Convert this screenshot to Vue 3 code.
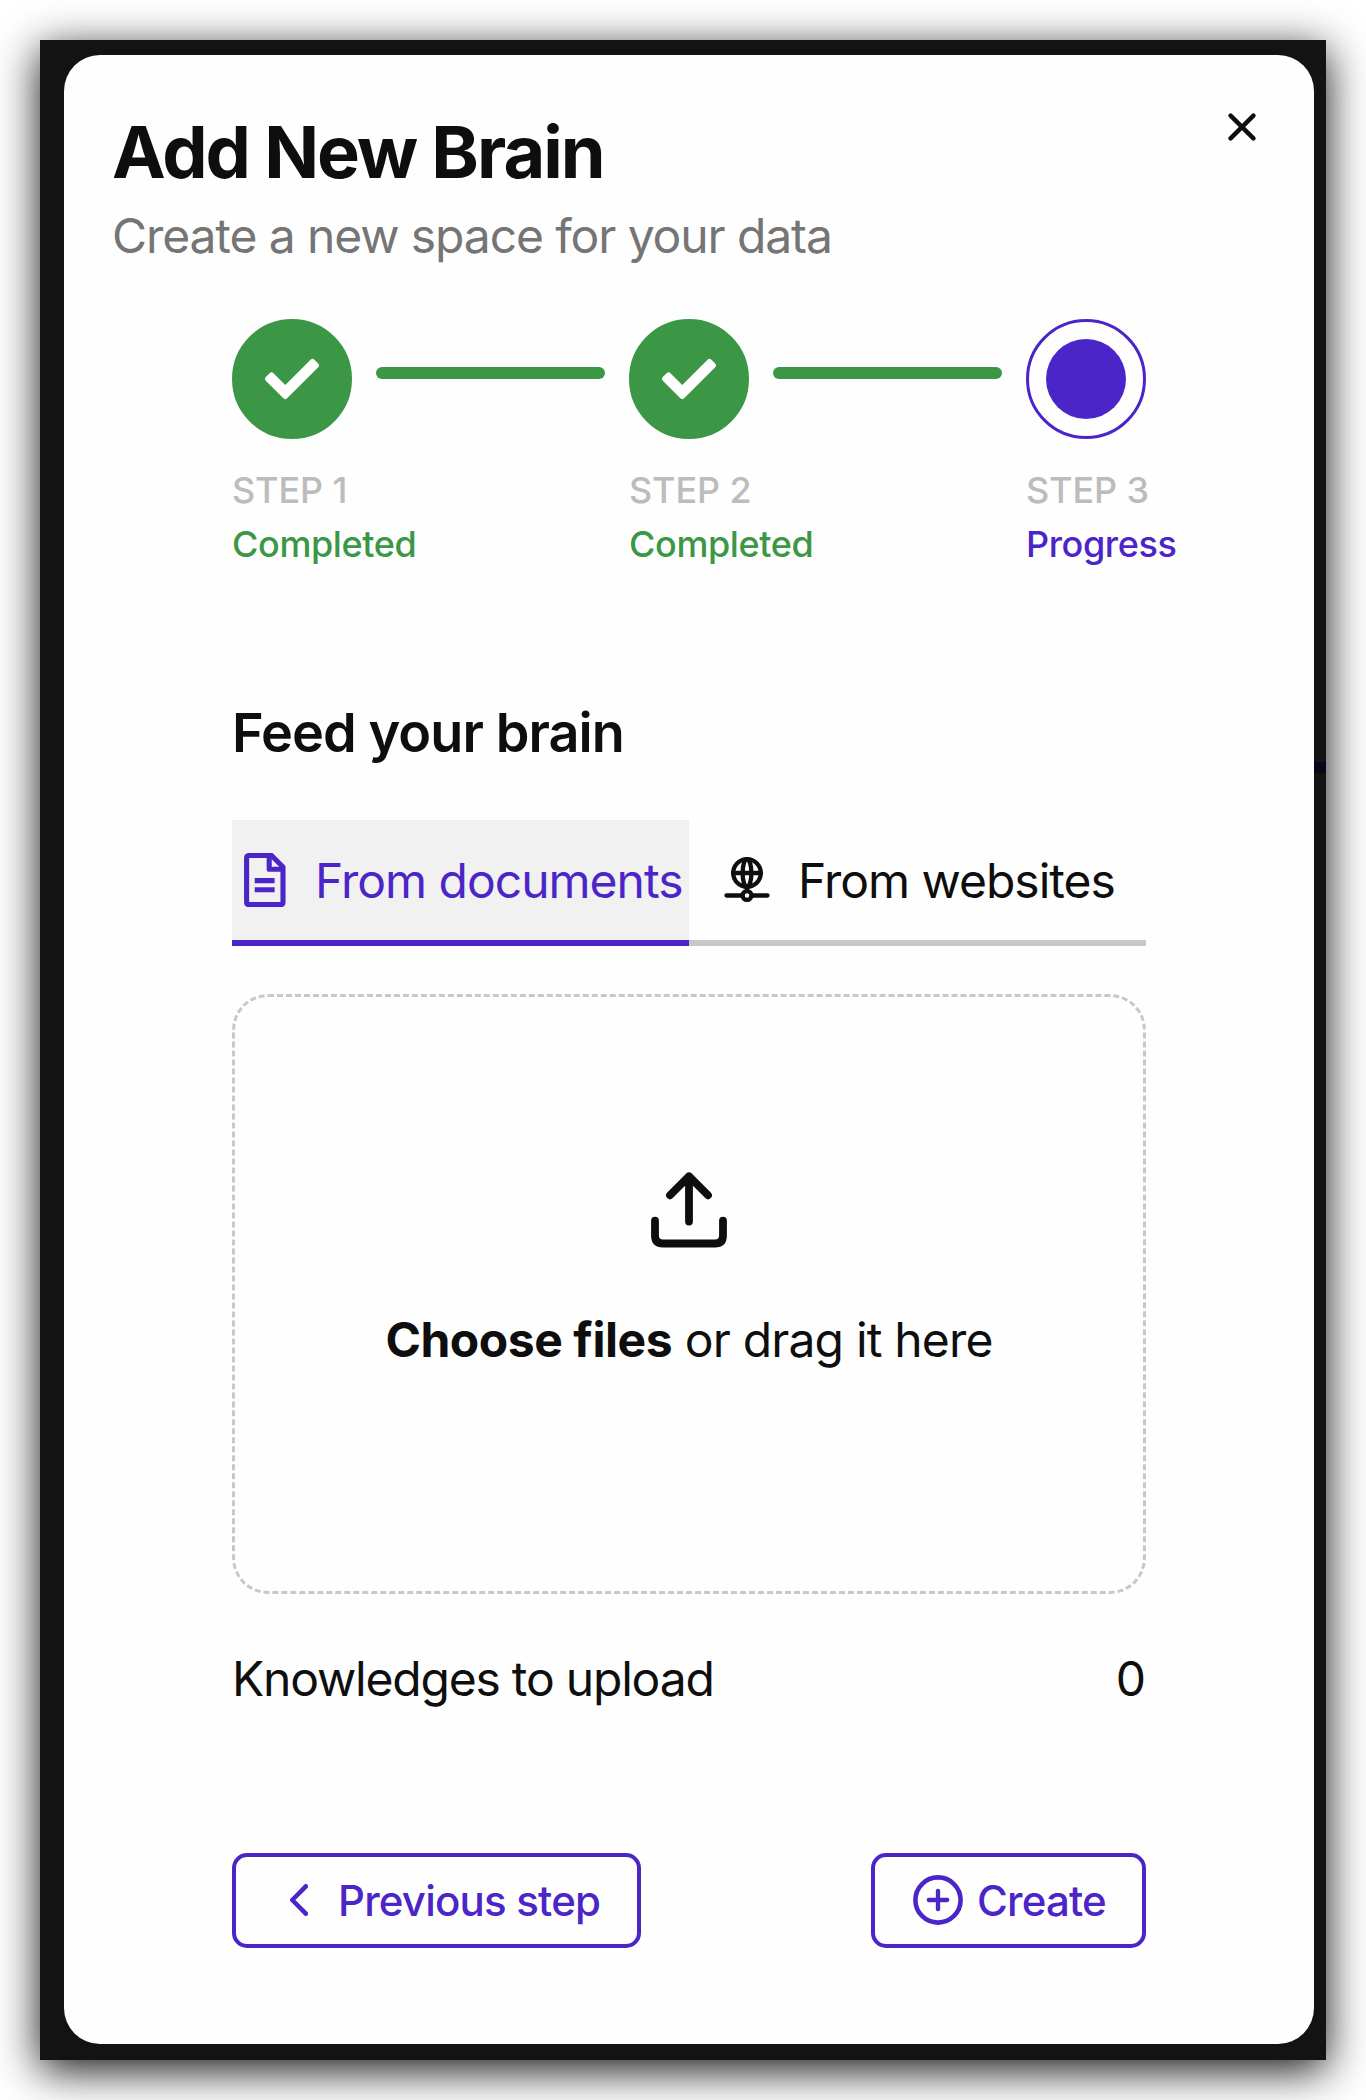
<script setup>
import { ref } from 'vue'

const steps = [
  { label: 'STEP 1', status: 'Completed', done: true },
  { label: 'STEP 2', status: 'Completed', done: true },
  { label: 'STEP 3', status: 'Progress', done: false },
]
const activeTab = ref('documents')
const knowledgeCount = ref(0)
</script>

<template>
  <div class="page">
    <div class="backdrop">
      <span class="accent"></span>
      <section class="modal">
        <header class="header">
          <div>
            <h1 class="title"><span>Add New Brain</span></h1>
            <p class="subtitle"><span>Create a new space for your data</span></p>
          </div>
          <button class="close" aria-label="Close">
            <svg width="28" height="28" viewBox="0 0 28 28"><path d="M2.6 2.6 25.4 25.4M25.4 2.6 2.6 25.4" /></svg>
          </button>
        </header>

        <div class="content">
          <div class="stepper">
            <template v-for="(step, i) in steps" :key="step.label">
              <div class="step" :class="{ done: step.done }">
                <div class="circle">
                  <svg v-if="step.done" width="54" height="54" viewBox="0 0 512 512">
                    <path d="M173.9 439.4 7.5 273c-10-10-10-26.2 0-36.2l36.2-36.2c10-10 26.2-10 36.2 0L192 312.7 432.1 72.6c10-10 26.2-10 36.2 0l36.2 36.2c10 10 10 26.2 0 36.2L210.1 439.4c-10 10-26.2 10-36.2 0z" />
                  </svg>
                  <span v-else class="dot"></span>
                </div>
                <span class="step-label">{{ step.label }}</span>
                <span class="step-status">{{ step.status }}</span>
              </div>
              <div v-if="i < steps.length - 1" class="bar"></div>
            </template>
          </div>

          <h2 class="section-title"><span>Feed your brain</span></h2>

          <div class="tabs">
            <button class="tab docs" :class="{ active: activeTab === 'documents' }" @click="activeTab = 'documents'">
              <svg class="doc-icon" width="42" height="54" viewBox="0 0 42 54">
                <path d="M5 2.5H27.5L39 14V49Q39 51.6 36.4 51.6H5.2Q2.6 51.6 2.6 49V5Q2.6 2.5 5 2.5Z" />
                <path d="M25.2 3V16.2H38.5" />
                <path d="M10.7 27.6H30.6M10.7 36.8H30.6" />
              </svg>
              <span>From documents</span>
            </button>
            <button class="tab sites" :class="{ active: activeTab === 'websites' }" @click="activeTab = 'websites'">
              <svg class="web-icon" width="46" height="46" viewBox="0 0 46 46">
                <circle cx="23" cy="16" r="13.8" />
                <ellipse cx="23" cy="16" rx="4.4" ry="13.8" />
                <path d="M9 16H37M23 30V34M2.5 38.5H17M29 38.5H43.5" />
                <circle cx="23" cy="38.5" r="4.4" />
              </svg>
              <span>From websites</span>
            </button>
          </div>

          <div class="dropzone">
            <svg width="76" height="76" viewBox="0 0 76 76">
              <path d="M38 49.5V4.5M19 23.3 38 4.3 57 23.3" />
              <path d="M4 48.7V63.5Q4 71.5 12 71.5H64Q72 71.5 72 63.5V48.7" />
            </svg>
            <p class="drop-text"><strong>Choose files</strong> or drag it here</p>
          </div>

          <div class="summary">
            <span class="summary-label">Knowledges to upload</span>
            <span>{{ knowledgeCount }}</span>
          </div>

          <footer class="actions">
            <button class="btn previous">
              <svg width="18" height="32" viewBox="0 0 18 32"><path d="M15.8 2.3 2.3 16 15.8 29.7" /></svg>
              <span>Previous step</span>
            </button>
            <button class="btn create">
              <svg width="50" height="50" viewBox="0 0 50 50">
                <circle cx="25" cy="25" r="22.6" />
                <path d="M25 15.8V34.2M15.8 25H34.2" stroke-width="4.3" />
              </svg>
              <span>Create</span>
            </button>
          </footer>
        </div>
      </section>
    </div>
  </div>
</template>

<style>
body { background: #fff; }
</style>

<style scoped>
* { box-sizing: border-box; margin: 0; }
.page {
  width: 1366px;
  height: 2100px;
  padding: 40px;
  overflow: hidden;
  background: #fff;
  color: #0e0e0e;
  font-family: Inter, "Liberation Sans", sans-serif;
}
.backdrop {
  position: relative;
  height: 2020px;
  padding: 15px 12px 16px 24px;
  background: #131313;
  box-shadow: 0 10px 41px rgba(0, 0, 0, 0.93);
}
.accent {
  position: absolute;
  right: 0;
  top: 722px;
  width: 12px;
  height: 11px;
  background: #08061a;
}
.modal {
  height: 1989px;
  padding: 53px 58px 0 48px;
  border-radius: 36px;
  background: #fefefe;
}
button {
  border: 0;
  padding: 0;
  background: none;
  color: inherit;
  font: inherit;
}
svg {
  display: block;
  flex: none;
  fill: none;
  stroke: currentColor;
}
.header { display: flex; justify-content: space-between; }
.title { font-size: 72px; line-height: 88px; font-weight: 700; letter-spacing: -1.95px; }
.subtitle { margin-top: 9.5px; font-size: 48px; line-height: 60px; letter-spacing: -1.1px; color: #757575; }
.close { align-self: flex-start; margin-top: 5px; }
.close svg { stroke-width: 4.4; stroke-linecap: round; }
.content { width: 914px; margin: 53px 0 0 120px; }
.stepper { display: flex; }
.step {
  display: flex;
  flex-direction: column;
  width: 120px;
  color: #4c25c8;
  font-weight: 500;
  white-space: nowrap;
}
.step.done { color: #3b9745; }
.circle {
  display: flex;
  align-items: center;
  justify-content: center;
  height: 120px;
  border: 3px solid currentColor;
  border-radius: 50%;
}
.done .circle { background: #3b9745; }
.circle svg { fill: #fff; stroke: none; }
.dot { width: 80px; height: 80px; border-radius: 50%; background: currentColor; }
.step-label { margin-top: 27px; font-size: 36px; line-height: 48px; letter-spacing: -0.15px; color: #bcbcbc; }
.step-status { margin-top: 6px; font-size: 36px; line-height: 48px; letter-spacing: -0.38px; }
.bar { flex: 1; height: 12px; margin: 48px 24px 0; border-radius: 6px; background: #3b9745; }
.section-title { margin-top: 132px; font-size: 54px; line-height: 66px; font-weight: 600; letter-spacing: -0.93px; }
.tabs { display: flex; margin-top: 54px; }
.tab {
  display: flex;
  align-items: center;
  width: 457px;
  height: 126px;
  border-bottom: 6px solid #c8c8c8;
  font-size: 48px;
  line-height: 60px;
  letter-spacing: -1px;
  white-space: nowrap;
}
.tab span { padding-top: 2px; }
.tab.active { color: #4c25c8; border-color: #4c25c8; background: #f1f1f1; }
.doc-icon { margin: 0 29px 0 12px; stroke-width: 5.1; stroke-linejoin: round; }
.web-icon { margin: 0 28px 0 35px; stroke-width: 4.3; stroke-linecap: round; }
.dropzone {
  display: flex;
  flex-direction: column;
  align-items: center;
  height: 600px;
  margin-top: 48px;
  padding-top: 175px;
  border: 3px dashed #c8c8c8;
  border-radius: 36px;
}
.dropzone svg { stroke-width: 7.8; stroke-linecap: round; stroke-linejoin: round; }
.drop-text { margin-top: 62px; font-size: 48px; line-height: 60px; letter-spacing: -0.82px; white-space: nowrap; }
.drop-text strong { font-weight: 700; letter-spacing: -0.45px; }
.summary {
  display: flex;
  justify-content: space-between;
  margin-top: 55.5px;
  font-size: 48px;
  line-height: 60px;
}
.summary-label { letter-spacing: -1.2px; }
.actions { display: flex; justify-content: space-between; margin-top: 143.5px; }
.btn {
  display: flex;
  align-items: center;
  height: 95px;
  border: 4px solid #4c25c8;
  border-radius: 15px;
  color: #4c25c8;
  font-size: 42px;
  font-weight: 500;
  line-height: 52px;
  letter-spacing: -0.8px;
  white-space: nowrap;
}
.btn span { padding-top: 2px; }
.btn svg { stroke-width: 4.6; stroke-linecap: round; stroke-linejoin: round; }
.previous { width: 409px; padding-left: 54px; gap: 30px; }
.create { width: 275px; padding-left: 38px; gap: 14px; }
</style>
